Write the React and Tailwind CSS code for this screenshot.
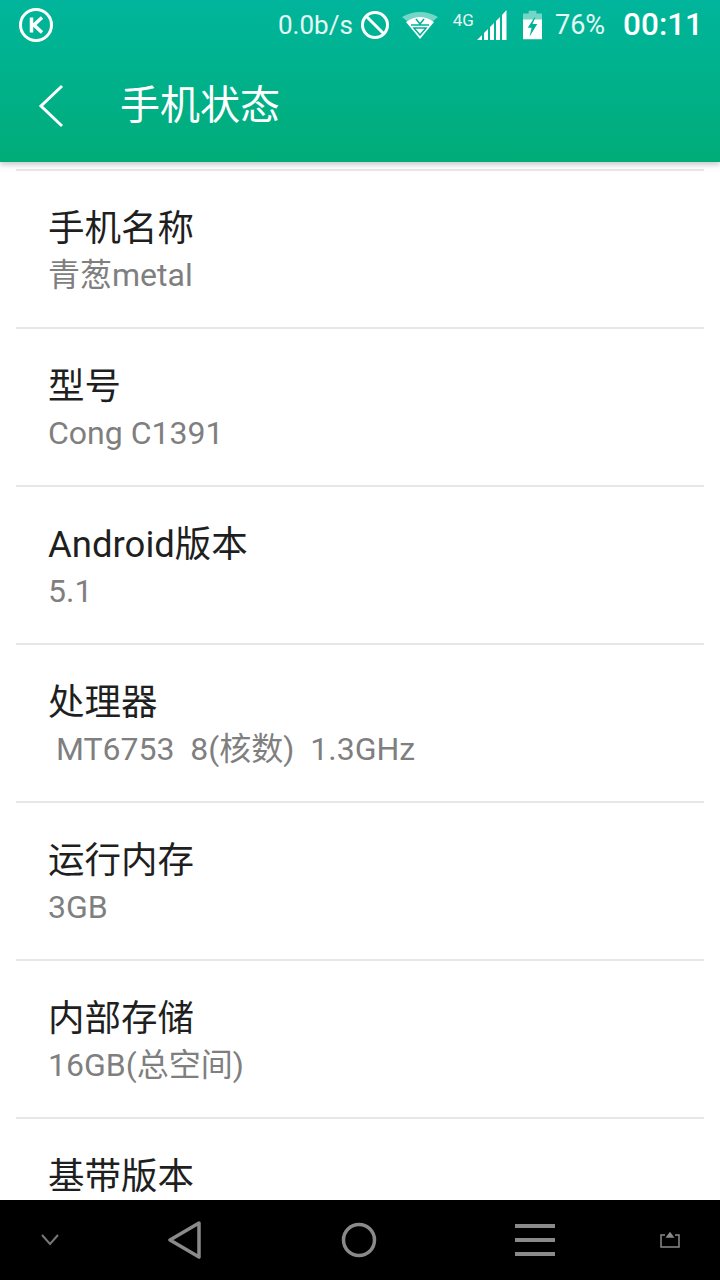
import React from 'react';

const font = "font-['Roboto','Noto_Sans_CJK_SC',sans-serif]";

const rows = [
  { title: '手机名称', value: '青葱metal' },
  { title: '型号', value: 'Cong C1391' },
  { title: 'Android版本', value: '5.1' },
  { title: '处理器', value: '\u00a0MT6753\u00a0\u00a08(核数)\u00a0\u00a01.3GHz' },
  { title: '运行内存', value: '3GB' },
  { title: '内部存储', value: '16GB(总空间)' },
  { title: '基带版本', value: '' },
];

const StatusBar = () => (
  <div className="flex h-[50px] items-center pl-[19px] pr-[17px]">
    <svg width="34" height="34" viewBox="0 0 34 34" fill="none" stroke="white">
      <circle cx="17" cy="17" r="15.5" strokeWidth="3" />
      <path d="M12.5 9.5v15M23 9.5l-8 7.5 8 7.5" strokeWidth="3.5" />
    </svg>
    <div className="ml-auto flex items-center">
      <span className="text-[26px] leading-none text-white/90">0.0b/s</span>
      <svg className="ml-[7px]" width="30" height="30" viewBox="0 0 30 30" fill="none" stroke="white" strokeWidth="3">
        <circle cx="15" cy="15" r="12.5" />
        <path d="M6 6l18 18" />
      </svg>
      <svg className="ml-[12px]" width="36" height="30" viewBox="0 0 36 30">
        <path d="M0 7Q18 -3 36 7L31 11Q18 4 5 11Z" fill="white" fillOpacity="0.45" />
        <path d="M4 12Q11 7 18 7Q25 7 32 12L18 29Z" fill="white" />
        <path d="M14 9L18 14L22 9M9 15H27M12 18H24L18 25Z" fill="none" stroke="#00b198" strokeWidth="1.500" />
      </svg>
      <div className="ml-[15px] mb-[10px] text-[17px] leading-none text-white/90">4G</div>
      <svg className="ml-[3px]" width="30" height="30" viewBox="0 0 30 30" fill="white">
        <path d="M0 30L5 25V30ZM7 23L11 19V30H7ZM13 17L17 13V30H13ZM19 11L23 7V30H19ZM25 5L29.500 0V30H25Z" />
      </svg>
      <svg className="ml-[16px]" width="19" height="30" viewBox="0 0 20 30">
        <path d="M6 0h8v3h6v6H0V3h6Z" fill="white" fillOpacity="0.45" />
        <path d="M0 9h20v21H0Z" fill="white" />
        <path d="M12 7L5 18h4l-2 9 8-13h-5l3-7Z" fill="#00b198" />
      </svg>
      <span className="ml-[13px] text-[27px] leading-none text-white/90">76%</span>
      <span className="ml-[18px] text-[31.5px] font-medium leading-none text-white">00:11</span>
    </div>
  </div>
);

const Row = ({ title, value }) => (
  <div className="mx-4 h-[158px] border-b-2 border-[#e6e6e6] px-[32px] pt-[35px] last:border-b-0">
    <div className="text-[36.5px] leading-[46px] text-[#1f1f1f]">{title}</div>
    <div className="mt-[1px] text-[32px] leading-[44px] text-[#7f7f7f]">{value}</div>
  </div>
);

export default function App() {
  return (
    <div className={`flex h-[1280px] w-[720px] flex-col overflow-hidden bg-white ${font}`}>
      <header className="relative z-10 h-[162px] shrink-0 bg-gradient-to-b from-[#00b59c] to-[#00ac78] shadow-[0_3px_5px_rgba(0,0,0,0.2)]">
        <StatusBar />
        <div className="flex h-[112px] items-center pl-[38px]">
          <svg width="26" height="44" viewBox="0 0 26 44" fill="none" stroke="white" strokeWidth="3">
            <path d="M24 2L3 22l21 20" />
          </svg>
          <h1 className="ml-[56px] text-[40px] font-normal leading-none text-white">手机状态</h1>
        </div>
      </header>
      <main className="min-h-0 flex-1 overflow-hidden">
        <div className="mx-4 mt-[7px] h-[2px] bg-[#e6e6e6]" />
        {rows.map((row) => (
          <Row key={row.title} title={row.title} value={row.value} />
        ))}
      </main>
      <nav className="flex h-[80px] shrink-0 items-center bg-black">
        <svg className="ml-[40px]" width="20" height="14" viewBox="0 0 20 14" fill="none" stroke="#777" strokeWidth="2">
          <path d="M2 2l8 9 8-9" />
        </svg>
        <svg className="ml-[108px]" width="34" height="38" viewBox="0 0 34 38" fill="none" stroke="#8a8a8a" strokeWidth="3.500" strokeLinejoin="round">
          <path d="M31 2L2 19l29 17Z" />
        </svg>
        <svg className="ml-[139px]" width="36" height="36" viewBox="0 0 36 36" fill="none" stroke="#8a8a8a" strokeWidth="3.500">
          <circle cx="18" cy="18" r="15.500" />
        </svg>
        <div className="ml-[138px] flex w-[40px] flex-col gap-[10px]">
          <div className="h-[4px] bg-[#8a8a8a]" />
          <div className="h-[4px] bg-[#8a8a8a]" />
          <div className="h-[4px] bg-[#8a8a8a]" />
        </div>
        <svg className="ml-[105px]" width="20" height="16" viewBox="0 0 20 16" fill="none" stroke="#8a8a8a" strokeWidth="1.500">
          <path d="M5 3H1v12h18V3h-4" />
          <path d="M7 5l3-4 3 4Z" fill="#8a8a8a" />
        </svg>
      </nav>
    </div>
  );
}
